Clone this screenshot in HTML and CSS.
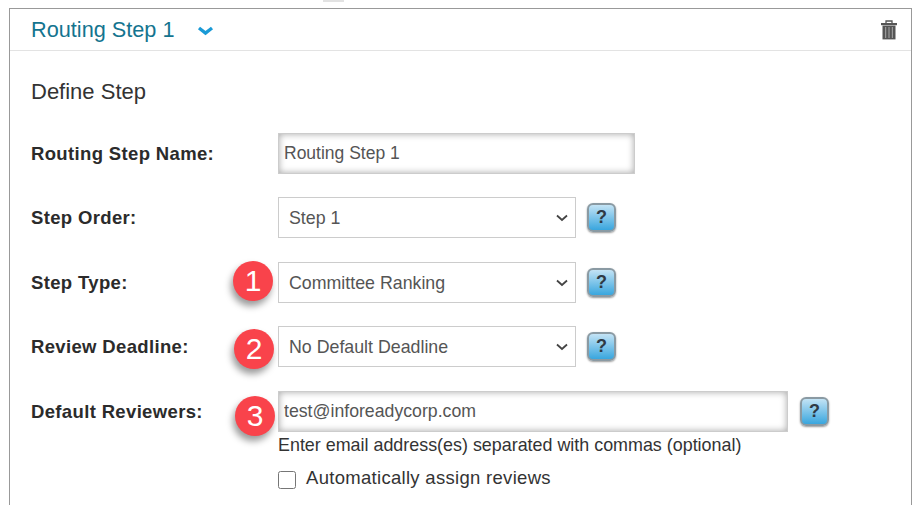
FILE: index.html
```html
<!DOCTYPE html>
<html lang="en">
<head>
    <meta charset="UTF-8">
    <meta name="viewport" content="width=device-width, initial-scale=1.0">
    <title>Routing Step</title>
    <link rel="stylesheet" href="styles.css">
</head>
<body>
    <div class="top-mark"></div>
    <div class="panel">
        <div class="panel-header">
            <h2 class="panel-title">Routing Step 1</h2>
            <svg class="chevron" viewBox="0 0 17 10" width="17" height="10"><path d="M2 2 L8.5 7 L15 2" fill="none" stroke="#1a9ad6" stroke-width="3.4"/></svg>
            <svg class="trash" viewBox="0 0 16 20" width="16" height="20">
                <path d="M5 3 V1 H11 V3" fill="none" stroke="#555" stroke-width="1.3"/>
                <rect x="0" y="3" width="16" height="2.2" fill="#555"/>
                <rect x="1.5" y="5.6" width="13" height="13.8" fill="#555"/>
                <path d="M4.6 7 V18 M8 7 V18 M11.4 7 V18" stroke="#999" stroke-width="1.2"/>
            </svg>
        </div>
        <div class="panel-body">
            <h3 class="section-title">Define Step</h3>

            <div class="form-row row-name">
                <label class="field-label">Routing Step Name:</label>
                <input class="text-input name-input" type="text" value="Routing Step 1">
            </div>

            <div class="form-row row-order">
                <label class="field-label">Step Order:</label>
                <select class="select-input"><option>Step 1</option></select>
                <span class="help-btn">?</span>
            </div>

            <div class="form-row row-type">
                <label class="field-label">Step Type:</label>
                <span class="badge badge-one">1</span>
                <select class="select-input"><option>Committee Ranking</option></select>
                <span class="help-btn">?</span>
            </div>

            <div class="form-row row-deadline">
                <label class="field-label">Review Deadline:</label>
                <span class="badge badge-two">2</span>
                <select class="select-input"><option>No Default Deadline</option></select>
                <span class="help-btn">?</span>
            </div>

            <div class="form-row row-reviewers">
                <label class="field-label">Default Reviewers:</label>
                <span class="badge badge-three">3</span>
                <input class="text-input reviewers-input" type="text" value="test@inforeadycorp.com">
                <span class="help-btn">?</span>
            </div>
            <p class="field-hint">Enter email address(es) separated with commas (optional)</p>
            <label class="check-row"><input class="check-box" type="checkbox"> Automatically assign reviews</label>
        </div>
    </div>
</body>
</html>
```

FILE: styles.css
```css
* {
    margin: 0;
    padding: 0;
    box-sizing: border-box;
    font-family: 'Liberation Sans', Arial, sans-serif;
}

html, body {
    height: 505px;
    overflow: hidden;
}

body {
    position: relative;
    background-color: #fff;
    padding: 8px 10px 0 9px;
    color: #333;
}

.top-mark {
    position: absolute;
    left: 323px;
    top: 0;
    width: 21px;
    height: 2px;
    background-color: #e2e2e2;
}

.panel {
    border: 1px solid #999;
    border-bottom: none;
    height: 497px;
}

.panel-header {
    display: flex;
    align-items: center;
    height: 42px;
    padding: 0 14px 0 21px;
    border-bottom: 1px solid #e3e3e3;
}

.panel-title {
    font-size: 21.7px;
    font-weight: normal;
    color: #14748f;
}

.chevron {
    margin-left: 23px;
    margin-top: 3px;
}

.trash {
    margin-left: auto;
    margin-top: 1px;
}

.panel-body {
    padding: 29px 21px 0;
}

.section-title {
    font-size: 22px;
    font-weight: normal;
    line-height: 24px;
    color: #333;
    margin-bottom: 29px;
}

.form-row {
    position: relative;
    display: flex;
    align-items: center;
    height: 41px;
    margin-bottom: 23px;
}

.row-order,
.row-deadline {
    margin-bottom: 24px;
}

.field-label {
    width: 247px;
    flex-shrink: 0;
    font-size: 18.5px;
    font-weight: bold;
    letter-spacing: 0.35px;
    color: #2b2b2b;
}

.text-input {
    height: 41px;
    padding: 0 5px;
    border: 1px solid #ccc;
    font-size: 17.7px;
    color: #555;
    outline: none;
    box-shadow: inset 0 0 7px rgba(0, 0, 0, 0.35);
}

.name-input {
    width: 357px;
    font-size: 17.5px;
}

.reviewers-input {
    width: 510px;
}

.select-input {
    appearance: none;
    width: 298px;
    height: 41px;
    padding-left: 10px;
    border: 1px solid #ccc;
    border-radius: 0;
    background-color: #fff;
    background-image: url("data:image/svg+xml,%3Csvg xmlns='http://www.w3.org/2000/svg' width='12' height='8'%3E%3Cpath d='M1 1.5 L6 6 L11 1.5' fill='none' stroke='%23444' stroke-width='1.8'/%3E%3C/svg%3E");
    background-repeat: no-repeat;
    background-position: right 7px center;
    font-size: 17.8px;
    color: #555;
    outline: none;
}

.help-btn {
    width: 29px;
    height: 29px;
    margin-left: 11px;
    border: 2px solid #8a9aa3;
    border-radius: 6px;
    background: linear-gradient(#c3e3f5, #39a6de);
    box-shadow: 0 1px 2px rgba(0, 0, 0, 0.4);
    display: flex;
    align-items: center;
    justify-content: center;
    font-size: 18px;
    font-weight: bold;
    color: #2f3a45;
}

.reviewers-input + .help-btn {
    margin-left: 12px;
}

.badge {
    position: absolute;
    width: 40px;
    height: 40px;
    border-radius: 50%;
    background-color: #f9434b;
    box-shadow: -2px 5px 7px rgba(0, 0, 0, 0.4);
    display: flex;
    align-items: center;
    justify-content: center;
    font-size: 30px;
    color: #fff;
}

.badge-one {
    left: 202px;
    top: -1px;
}

.badge-two {
    left: 203px;
    top: 3px;
}

.badge-three {
    left: 204px;
    top: 5px;
}

.field-hint {
    margin-top: -21px;
    margin-left: 247px;
    font-size: 17.9px;
    line-height: 22px;
    color: #333;
}

.check-row {
    display: flex;
    align-items: center;
    margin-top: 10px;
    margin-left: 247px;
    font-size: 18.5px;
    letter-spacing: 0.3px;
    color: #333;
}

.check-box {
    width: 18px;
    height: 18px;
    margin-right: 10px;
    margin-top: 5px;
}
```
